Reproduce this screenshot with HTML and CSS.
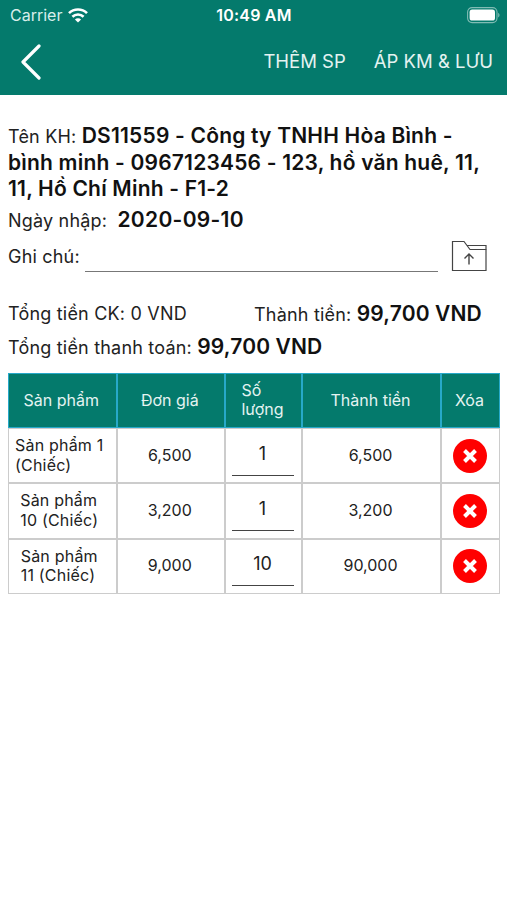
FILE: index.html
```
<!DOCTYPE html>
<html lang="vi">
<head>
    <meta charset="UTF-8">
    <meta name="viewport" content="width=device-width, initial-scale=1.0">
    <title>Đơn hàng</title>
    <link rel="stylesheet" href="styles.css">
</head>
<body>
<header class="header">
    <div class="status-bar">
        <div class="carrier">
            <span>Carrier</span>
            <svg width="20" height="15" viewBox="0 0 20 15" fill="none" stroke="#fff" stroke-width="2.6">
                <path d="M1 5.2a12.8 12.8 0 0 1 18 0"/>
                <path d="M4.4 8.8a8 8 0 0 1 11.2 0"/>
                <path d="M10 14.6l-3.1-3.1a4.4 4.4 0 0 1 6.2 0z" fill="#fff" stroke="none"/>
            </svg>
        </div>
        <div class="time">10:49 AM</div>
        <div class="battery">
            <svg width="33" height="17" viewBox="0 0 33 17">
                <rect x="0.6" y="0.6" width="29.4" height="15" rx="4.5" fill="none" stroke="#80bcb4" stroke-width="1.1"/>
                <rect x="2.6" y="2.6" width="25.4" height="11" rx="2.6" fill="#fff"/>
                <path d="M31.2 5.8c1.8.8 1.8 3.8 0 4.6z" fill="#80bcb4"/>
            </svg>
        </div>
    </div>
    <nav class="nav-bar">
        <svg class="back" width="20" height="36" viewBox="0 0 20 36" fill="none" stroke="#fff" stroke-width="3.2" stroke-linecap="round" stroke-linejoin="round">
            <path d="M18 2L2 18l16 16"/>
        </svg>
        <span class="nav-action add">THÊM SP</span>
        <span class="nav-action save">ÁP KM &amp; LƯU</span>
    </nav>
</header>

<main class="container">
    <div class="customer">Tên KH: <b>DS11559 - Công ty TNHH Hòa Bình -<br>bình minh - 0967123456 - 123, hồ văn huê, 11,<br>11, Hồ Chí Minh - F1-2</b></div>
    <div class="date">Ngày nhập: <b>2020-09-10</b></div>
    <div class="note">
        <label for="note">Ghi chú:</label>
        <input type="text" id="note">
        <svg width="36" height="32" viewBox="0 0 36 32" fill="none" stroke="#444" stroke-width="1.2">
            <path d="M1.500 30.500V1.500h11.500l6 8h16v21z"/>
            <path d="M16 5.500h19v4"/>
            <path d="M18 24.500V14.500M13.500 18.500l4.500-4.500 4.500 4.500" stroke-width="1.4"/>
        </svg>
    </div>

    <div class="totals">
        <div class="discount">Tổng tiền CK: 0 VND</div>
        <div class="amount">Thành tiền: <b>99,700 VND</b></div>
    </div>
    <div class="payment">Tổng tiền thanh toán: <b>99,700 VND</b></div>

    <table>
        <colgroup>
            <col class="col-name">
            <col class="col-price">
            <col class="col-qty">
            <col class="col-total">
            <col class="col-delete">
        </colgroup>
        <thead>
        <tr>
            <th>Sản phẩm</th>
            <th>Đơn giá</th>
            <th><span class="lines">Số<br>lượng</span></th>
            <th>Thành tiền</th>
            <th>Xóa</th>
        </tr>
        </thead>
        <tbody>
        <tr>
            <td class="name"><span class="lines">Sản phẩm 1<br>(Chiếc)</span></td>
            <td>6,500</td>
            <td><input class="qty" type="text" value="1"></td>
            <td>6,500</td>
            <td>
                <svg class="delete" width="34" height="34" viewBox="0 0 34 34">
                    <circle cx="17" cy="17" r="17" fill="#f00"/>
                    <path d="M11.500 11.500l11 11M22.500 11.500l-11 11" stroke="#fff" stroke-width="4"/>
                </svg>
            </td>
        </tr>
        <tr>
            <td class="name"><span class="lines">Sản phẩm<br>10 (Chiếc)</span></td>
            <td>3,200</td>
            <td><input class="qty" type="text" value="1"></td>
            <td>3,200</td>
            <td>
                <svg class="delete" width="34" height="34" viewBox="0 0 34 34">
                    <circle cx="17" cy="17" r="17" fill="#f00"/>
                    <path d="M11.500 11.500l11 11M22.500 11.500l-11 11" stroke="#fff" stroke-width="4"/>
                </svg>
            </td>
        </tr>
        <tr>
            <td class="name"><span class="lines">Sản phẩm<br>11 (Chiếc)</span></td>
            <td>9,000</td>
            <td><input class="qty" type="text" value="10"></td>
            <td>90,000</td>
            <td>
                <svg class="delete" width="34" height="34" viewBox="0 0 34 34">
                    <circle cx="17" cy="17" r="17" fill="#f00"/>
                    <path d="M11.500 11.500l11 11M22.500 11.500l-11 11" stroke="#fff" stroke-width="4"/>
                </svg>
            </td>
        </tr>
        </tbody>
    </table>
</main>
</body>
</html>
```
FILE: styles.css
```
* {
    box-sizing: border-box;
}
body {
    font-family: Inter, "Liberation Sans", sans-serif;
    font-size: 18px;
    letter-spacing: 0.2px;
    margin: 0;
    background: #fff;
    color: #222;
}
b {
    font-weight: 600;
    font-size: 21px;
    color: #111;
}
.header {
    height: 95px;
    background: #047a6c;
    color: #fff;
    letter-spacing: 0;
}
.status-bar {
    display: grid;
    grid-template-columns: 1fr auto 1fr;
    align-items: center;
    height: 30px;
    padding: 0 7px 0 10px;
}
.carrier {
    display: flex;
    align-items: center;
    gap: 6px;
    font-size: 16px;
    color: #d8eeeb;
}
.time {
    margin-right: 2px;
    font-size: 16px;
    font-weight: 600;
    letter-spacing: 0.2px;
}
.battery {
    display: flex;
    justify-content: flex-end;
}
.nav-bar {
    display: flex;
    align-items: center;
    height: 63px;
    padding: 0 14px 0 21px;
}
.nav-action {
    padding-bottom: 2px;
    font-size: 18.5px;
    color: #e4f3f1;
    white-space: nowrap;
}
.add {
    margin-left: auto;
}
.save {
    margin-left: 28px;
}
.container {
    padding: 28px 7px 0 8px;
}
.customer {
    line-height: 25.6px;
    white-space: nowrap;
}
.date {
    margin-top: 3px;
    line-height: 28px;
}
.date b {
    margin-left: 5px;
    letter-spacing: 0.3px;
}
.note {
    display: flex;
    align-items: flex-end;
    height: 36px;
    margin-top: 1px;
}
.note label {
    line-height: 30px;
    width: 77px;
    white-space: nowrap;
}
.note input {
    width: 353px;
    height: 30px;
    margin-right: 13px;
    padding: 0;
    border: none;
    border-bottom: 1px solid #777;
    outline: none;
}
.totals {
    display: flex;
    margin-top: 27px;
    line-height: 30px;
}
.discount {
    width: 246px;
}
.payment {
    margin-top: 2px;
    line-height: 30px;
}
.totals b,
.payment b {
    letter-spacing: 0.15px;
}
table {
    width: 492px;
    margin-top: 10px;
    table-layout: fixed;
    border-collapse: separate;
    border-spacing: 0;
    font-size: 16px;
    line-height: 19.5px;
    letter-spacing: 0;
}
.col-name,
.col-price {
    width: 108.5px;
}
.col-qty {
    width: 77px;
}
.col-total {
    width: 139px;
}
.col-delete {
    width: 59px;
}
th, td {
    height: 55.25px;
    padding: 0 2px 0 0;
    text-align: center;
    vertical-align: middle;
    font-weight: 400;
    border: 1px solid #ccc;
}
th {
    background: #047a6c;
    color: #e4f3f1;
    border-color: #27a9c9;
}
.name {
    padding-right: 6px;
    letter-spacing: 0.2px;
}
.lines {
    display: inline-block;
    text-align: left;
    vertical-align: middle;
}
.qty {
    display: block;
    width: 62px;
    height: 40px;
    margin: 0 auto;
    padding: 0 0 4px;
    border: none;
    border-bottom: 1px solid #444;
    outline: none;
    font-family: inherit;
    font-size: 18px;
    text-align: center;
    color: #222;
}
.delete {
    display: block;
    margin: 0 auto;
}
```
